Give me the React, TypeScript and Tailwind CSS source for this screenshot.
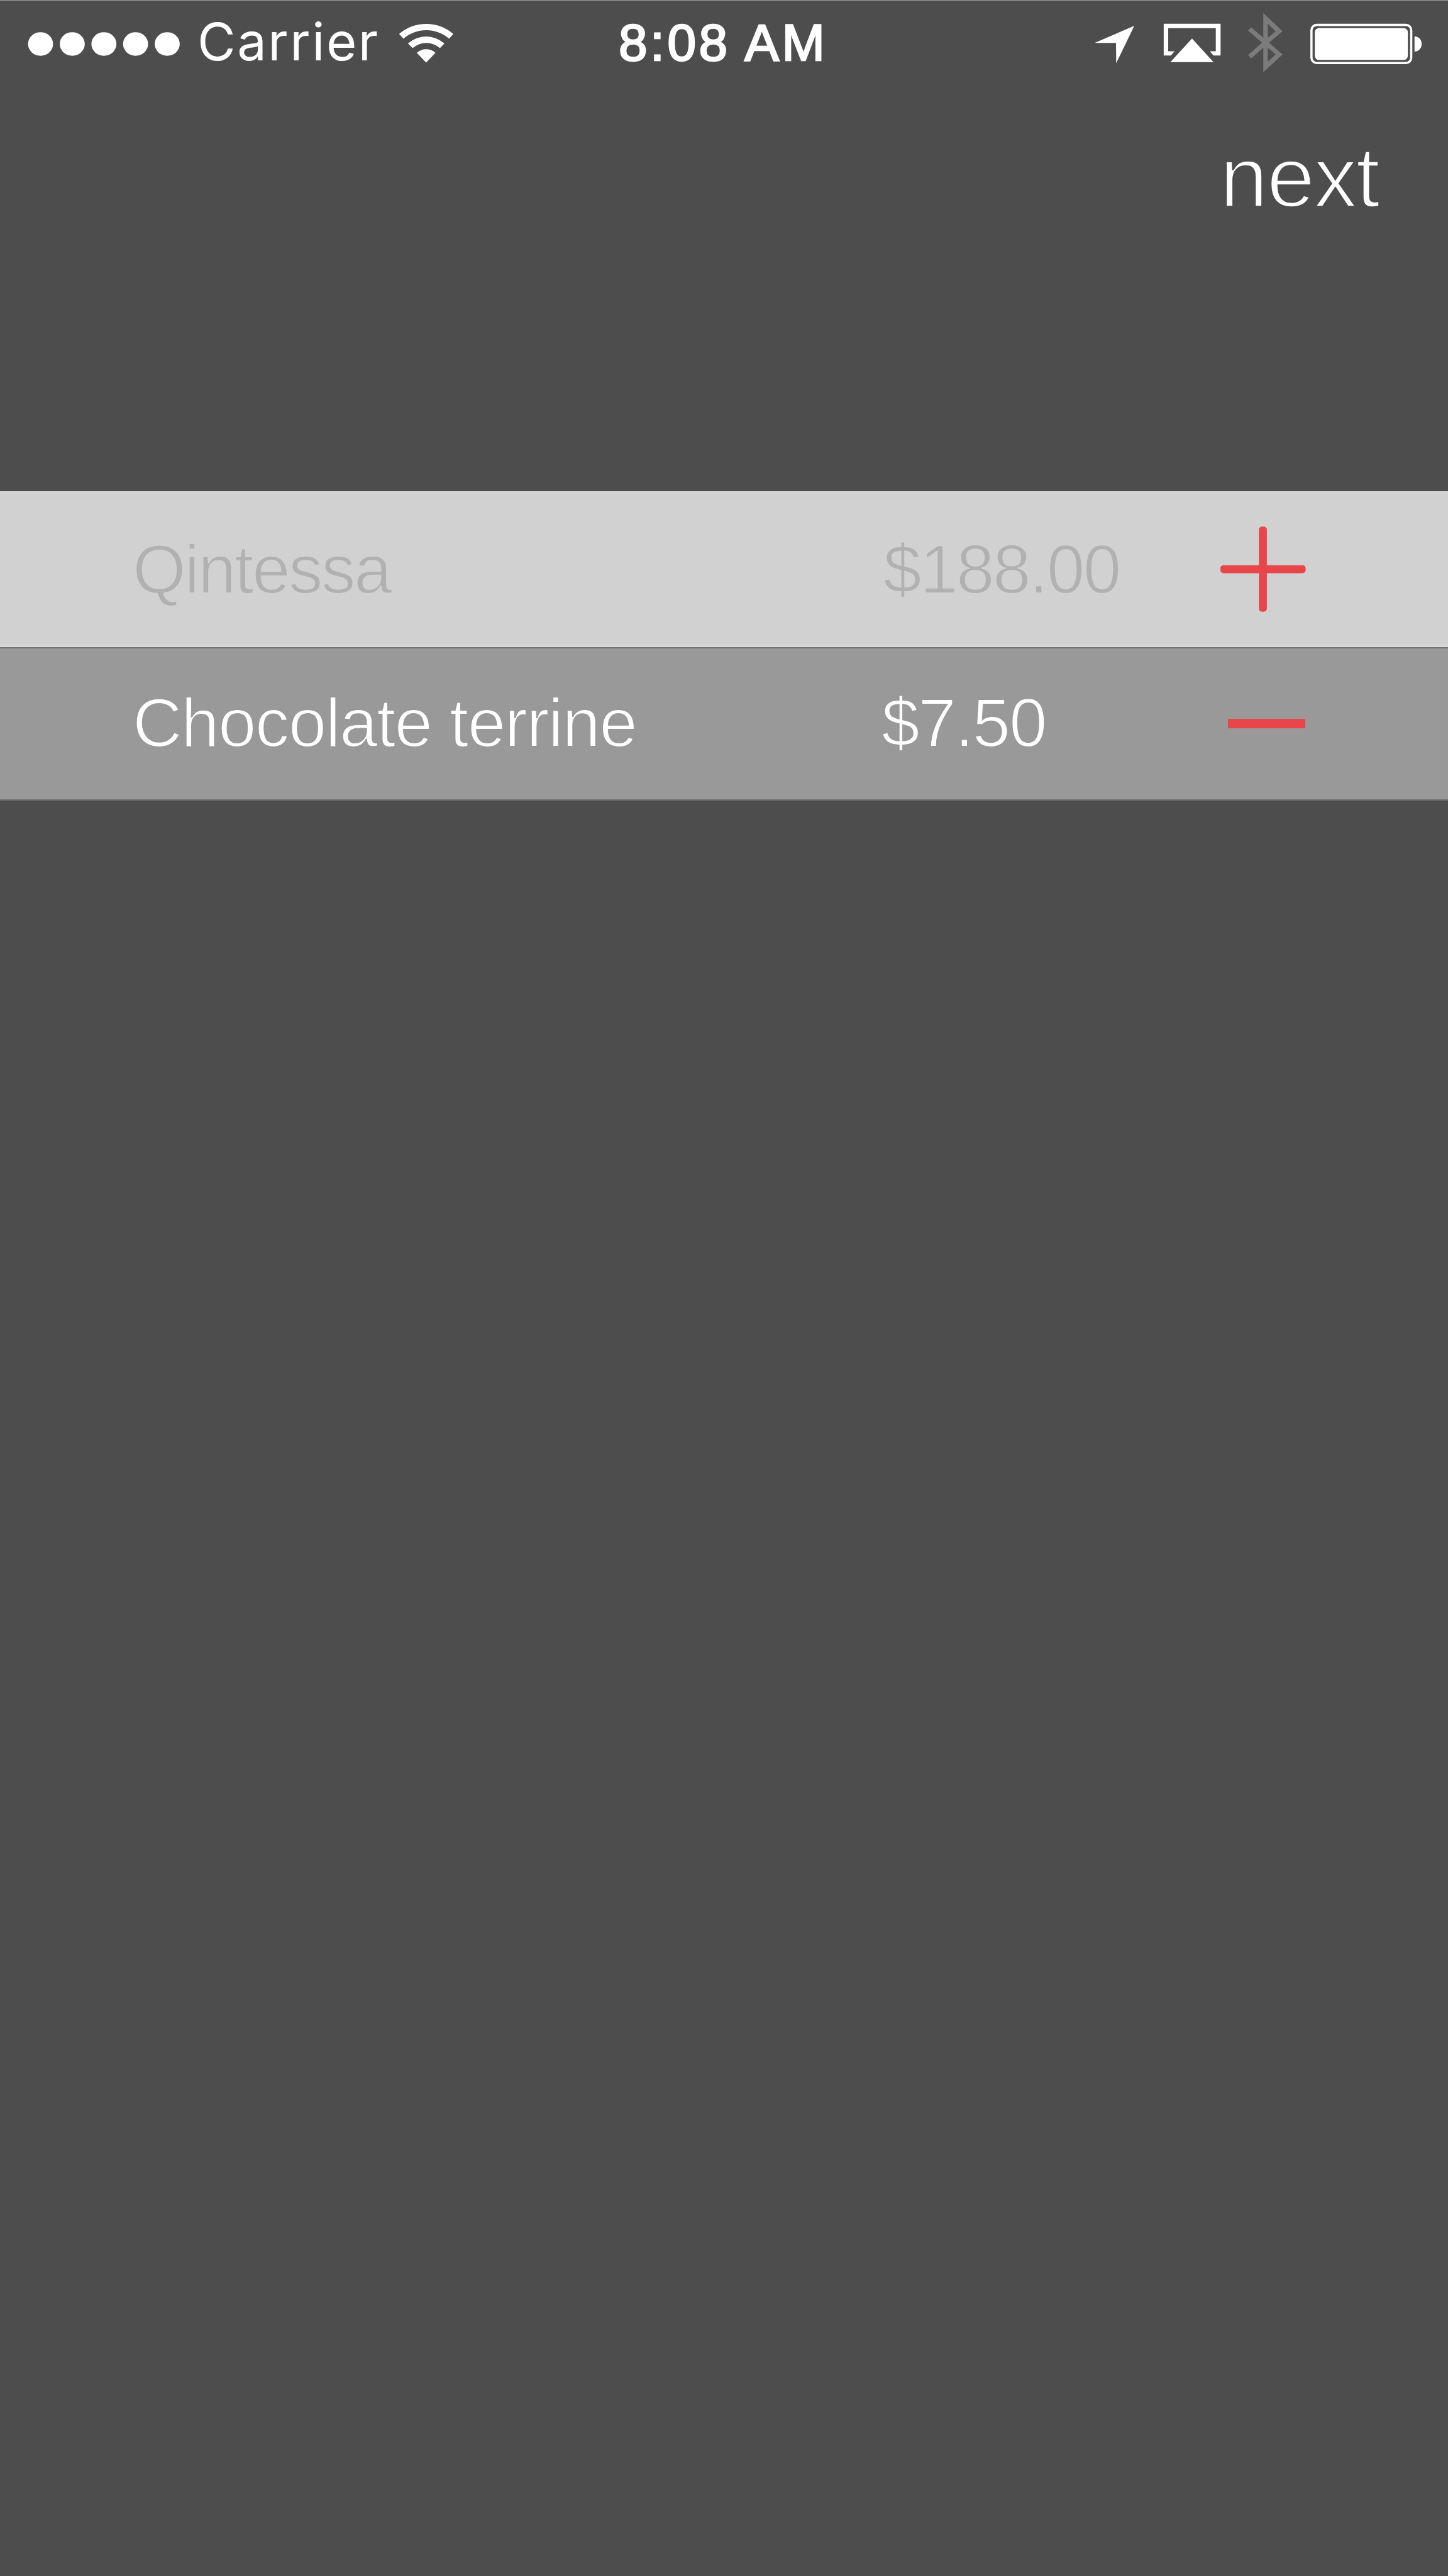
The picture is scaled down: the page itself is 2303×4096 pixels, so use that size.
import React from 'react';

interface Item {
  name: string;
  price: string;
  added: boolean;
}

const items: Item[] = [
  { name: 'Qintessa', price: '$188.00', added: false },
  { name: 'Chocolate terrine', price: '$7.50', added: true },
];

const SignalDots = () => (
  <svg className="w-[295px] h-[138px] shrink-0" viewBox="0 0 400 187.2" fill="#fff">
    {[87.4, 155.8, 224.1, 292.4, 360.7].map(cx => (
      <ellipse key={cx} cx={cx} cy={93.5} rx={27} ry={25.5} />
    ))}
  </svg>
);

const WifiIcon = () => (
  <svg className="w-[96px] h-[138px] shrink-0" viewBox="855 0 130.3 187.2" fill="#fff">
    <path d="M861.5 72A89 89 0 0 1 978.5 72L969.5 82A75.7 75.7 0 0 0 870.7 82Z" />
    <path d="M880.5 92.3A59.4 59.4 0 0 1 959.3 92.3L949.7 102.5A44.7 44.7 0 0 0 890.5 102.5Z" />
    <path d="M899.7 112.6A30 30 0 0 1 940 112.6L919.8 133.7Z" />
  </svg>
);

const LocationIcon = () => (
  <svg className="w-[70px] h-[138px] shrink-0" viewBox="2360 0 95 187.2" fill="#fff">
    <path d="M2448.3 54.3L2409.3 135L2408.8 91.3L2362.6 91.3Z" />
  </svg>
);

const AirplayIcon = () => (
  <svg className="w-[94px] h-[138px] shrink-0" viewBox="2509 0 127.5 187.2" fill="#fff">
    <path d="M2511.5 50H2634.2V118.3H2618.8L2611.1 109.3H2623.9V59.4H2521.2V109.3H2535.1L2526.9 118.3H2511.5Z" />
    <path d="M2572.6 81.7L2618.8 132.5H2525.9Z" />
  </svg>
);

const BluetoothIcon = () => (
  <svg className="w-[59px] h-[138px] shrink-0" viewBox="2691 0 80 187.2" fill="#7b7b7b" fillRule="evenodd">
    <path d="M2726.6 27L2768.2 66L2738.9 90.7L2768.2 116L2726.6 154.3V101.7L2700.4 124.3L2693.7 117.3L2724 90.7L2693.7 64.7L2700.4 57.7L2726.6 80ZM2736.3 50V80L2753.3 66ZM2736.3 101.7V131.7L2753.3 116Z" />
  </svg>
);

const BatteryIcon = () => (
  <svg className="w-[181px] h-[138px] shrink-0" viewBox="2826 0 245.6 187.2" fill="#fff">
    <rect x={2831.2} y={52.4} width={215.3} height={82.2} rx={11.5} fill="none" stroke="#fff" strokeWidth={4.8} />
    <rect x={2838.5} y={59.2} width={200.7} height={68.8} rx={9} />
    <path d="M3053.6 77A15.4 16.5 0 0 1 3053.6 110Z" />
  </svg>
);

const PlusIcon = () => (
  <svg className="w-[136px] h-[136px]" viewBox="0 0 136 136" fill="#e8464b">
    <rect x={0} y={61.8} width={135.6} height={12.6} rx={5} />
    <rect x={61.3} y={0.3} width={12.6} height={135.4} rx={5} />
  </svg>
);

const StatusBar = () => (
  <div className="flex items-start h-[137px]">
    <SignalDots />
    <span className="w-[335px] pl-[19px] font-['Inter',sans-serif] text-[83px] leading-[131px] tracking-[2.5px]">
      Carrier
    </span>
    <WifiIcon />
    <span className="w-[1013px] pl-[258px] text-[82px] leading-[133px] tracking-[4.5px] whitespace-nowrap [-webkit-text-stroke:2.6px_#fff]">
      8:08 AM
    </span>
    <div className="flex">
      <LocationIcon />
      <div className="flex gap-10 pl-10">
        <AirplayIcon />
        <BluetoothIcon />
        <BatteryIcon />
      </div>
    </div>
  </div>
);

// the text stroke takes the row's own colour, which thins the letters to a light weight
const ItemRow: React.FC<{ item: Item }> = ({ item }) => (
  <div
    className={
      item.added
        ? 'flex items-center h-[242px] bg-[#999] border-b-2 border-[#707070] text-white [-webkit-text-stroke:2.2px_#999]'
        : 'flex items-center h-[250px] bg-[#d1d1d1] border-b-2 border-[#707070] text-[#b1b1b1] [-webkit-text-stroke:2px_#d1d1d1] shadow-[inset_0_-3px_0_#d8d8d8]'
    }
  >
    <span className={item.added ? 'w-[1402px] pl-[211px] pb-1 tracking-[-1.7px]' : 'w-[1405px] pl-[211px] tracking-[-2.5px]'}>
      {item.name}
    </span>
    <span className={item.added ? 'w-[551px] pb-1 tracking-[-2.3px]' : 'w-[536px] tracking-[-2.6px]'}>{item.price}</span>
    <button type="button">
      {item.added ? <div className="w-[123px] h-[15px] mb-px bg-[#e8464b]" /> : <PlusIcon />}
    </button>
  </div>
);

const App = () => {
  return (
    <div className="w-[2303px] h-[4096px] overflow-hidden bg-[#4d4d4d] text-white font-['Liberation_Sans',Arial,sans-serif]">
      <div className="h-px bg-[#9a9e9e]" />
      <StatusBar />
      <div className="flex justify-end h-[643px] pr-[102px]">
        <button
          type="button"
          className="w-[261px] h-[286px] text-left text-[138px] leading-[286px] tracking-[-2px] [-webkit-text-stroke:3.3px_#4d4d4d]"
        >
          next
        </button>
      </div>
      <div className="text-[109px] leading-[160px]">
        {items.map(item => (
          <ItemRow key={item.name} item={item} />
        ))}
      </div>
    </div>
  );
};

export default App;
